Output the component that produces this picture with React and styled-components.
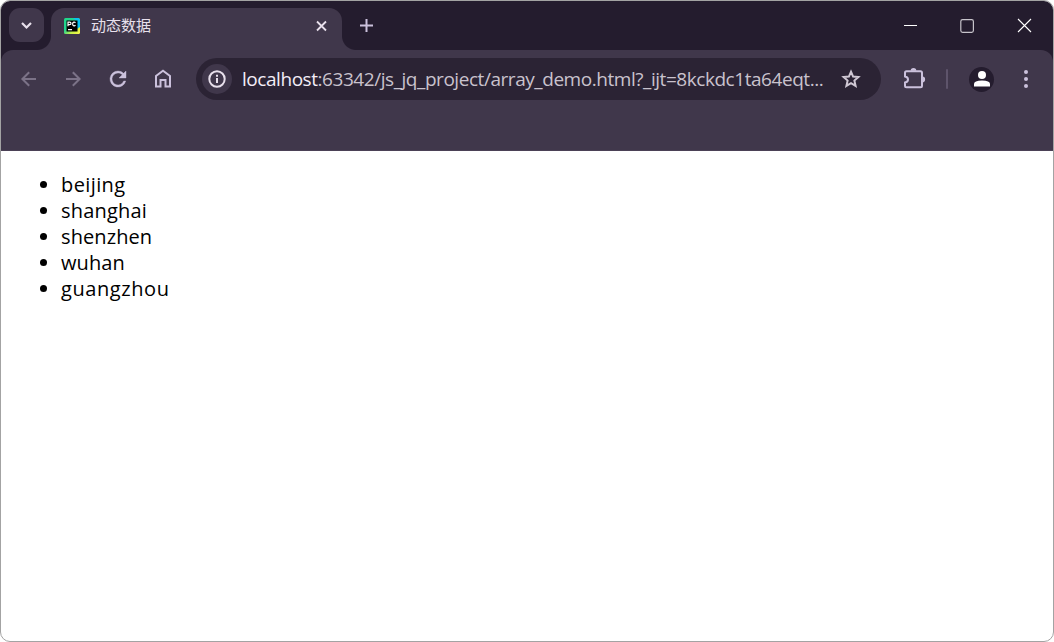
import React from "react";
import styled, { createGlobalStyle } from "styled-components";

const color = {
  frame: "#241c2e",
  toolbar: "#40374b",
  field: "#2b2334",
  icon: "#cbc1dc",
  dim: "#7b7287",
  light: "#e8e0ec",
};

const GlobalStyle = createGlobalStyle`
  *, *::before, *::after { box-sizing: border-box; }
  body { margin: 0; background: #fff; }
`;

const Window = styled.div`
  width: 1054px;
  height: 642px;
  display: flex;
  flex-direction: column;
  overflow: hidden;
  border: 1px solid #a3a3a3;
  border-radius: 10px;
  background: #fff;
  font-family: "Open Sans", "Noto Sans CJK SC", sans-serif;
`;

const TitleBar = styled.header`
  height: 49px;
  flex: none;
  display: flex;
  background: ${color.frame};
`;

const TabSearch = styled.button`
  width: 35px;
  height: 34px;
  margin: 7px 7px 0 8px;
  padding: 0;
  border: 0;
  border-radius: 11px;
  background: ${color.toolbar};
  display: grid;
  place-items: center;
`;

const Tab = styled.div`
  position: relative;
  width: 291px;
  height: 42px;
  margin-top: 7px;
  padding: 0 15px 6px 13px;
  display: flex;
  align-items: center;
  border-radius: 13px 13px 0 0;
  background: ${color.toolbar};

  &::before,
  &::after {
    content: "";
    position: absolute;
    bottom: 0;
    width: 14px;
    height: 14px;
  }
  &::before {
    left: -14px;
    background: radial-gradient(circle at 0 0, transparent 13.5px, ${color.toolbar} 14.5px);
  }
  &::after {
    right: -14px;
    background: radial-gradient(circle at 100% 0, transparent 13.5px, ${color.toolbar} 14.5px);
  }
`;

const TabTitle = styled.span`
  flex: 1;
  margin: -2px 0 0 11px;
  font: 15px/20px "Noto Sans CJK SC", sans-serif;
  color: ${color.light};
`;

const NewTab = styled.div`
  width: 48px;
  height: 49px;
  display: grid;
  place-items: center;
`;

const Controls = styled.div`
  margin-left: auto;
  display: flex;
`;

const Control = styled.div`
  width: 57px;
  height: 49px;
  display: grid;
  place-items: center;
`;

const ToolbarShell = styled.div`
  flex: none;
  background: ${color.frame};
`;

const Toolbar = styled.div`
  height: 101px;
  padding: 8px 8px 0 5px;
  display: flex;
  align-items: flex-start;
  border-radius: 12px 12px 0 0;
  background: ${color.toolbar};
  border-bottom: 1px solid #4b4156;
`;

const Tool = styled.div`
  width: ${(p) => p.$w || 45}px;
  height: 42px;
  flex: none;
  display: grid;
  place-items: center;
`;

const AddressBar = styled.div`
  width: 685px;
  height: 42px;
  margin-left: 11px;
  padding: 0 18px 0 6px;
  display: flex;
  align-items: center;
  border-radius: 21px;
  background: ${color.field};
`;

const SiteInfo = styled.div`
  width: 30px;
  height: 30px;
  flex: none;
  border-radius: 50%;
  background: ${color.toolbar};
  display: grid;
  place-items: center;
`;

const Url = styled.span`
  flex: 1;
  margin-left: 10px;
  white-space: nowrap;
  font-size: 19px;
  line-height: 26px;
  letter-spacing: -0.45px;
  color: #c9c2cd;
`;

const Host = styled.span`
  color: #f3edf7;
`;

const Divider = styled.div`
  width: 2px;
  height: 20px;
  margin-top: 11px;
  border-radius: 1px;
  background: #5e546b;
`;

const Avatar = styled.div`
  width: 25px;
  height: 25px;
  border-radius: 50%;
  background: ${color.frame};
  display: grid;
  place-items: center;
`;

const Page = styled.main`
  flex: 1;
`;

const List = styled.ul`
  margin: 21px 0 0;
  padding: 0 0 0 60px;
  font-size: 20px;
  line-height: 26px;
  color: #000;
`;

const Item = styled.li`
  letter-spacing: ${(p) => p.$spacing || 0}px;
`;

const Line = styled.svg.attrs((p) => ({ width: p.$w, height: p.$h || p.$w }))`
  display: block;
  overflow: visible;
  fill: none;
  stroke: ${(p) => p.$color || color.icon};
  stroke-width: ${(p) => p.$stroke || 2};
`;

const items = [
  { name: "beijing", spacing: 0.4 },
  { name: "shanghai", spacing: 0.2 },
  { name: "shenzhen", spacing: 0.1 },
  { name: "wuhan", spacing: 0.1 },
  { name: "guangzhou", spacing: 0.58 },
];

function PyCharmIcon() {
  return (
    <svg width="16" height="16" viewBox="0 0 16 16">
      <defs>
        <linearGradient id="pc" x1="0" y1="0" x2="1" y2="1">
          <stop offset="0" stopColor="#20d789" />
          <stop offset="0.4" stopColor="#22d38f" />
          <stop offset="0.7" stopColor="#c8ef45" />
          <stop offset="1" stopColor="#fcf84a" />
        </linearGradient>
      </defs>
      <rect width="16" height="16" rx="1.5" fill="url(#pc)" />
      <path d="M9 0H14.5L16 1.5V9L13 11V3Z" fill="#07c3f2" />
      <rect x="2.5" y="2.5" width="11" height="11" fill="#000" />
      <path d="M4 8.3V4.2H5.7Q7 4.2 7 5.4T5.7 6.7H4M11.5 4.7Q10.7 4 9.8 4.2Q8.6 4.5 8.6 6T9.8 7.8Q10.8 8 11.5 7.2M4 11.6H8" fill="none" stroke="#fff" strokeWidth="1.2" />
    </svg>
  );
}

export default function App() {
  return (
    <>
      <GlobalStyle />
      <Window>
        <TitleBar>
          <TabSearch aria-label="Search tabs">
            <Line $w={11} $h={7} $color={color.light} $stroke={2.2} viewBox="0 0 11 7"><path d="M1 1L5.5 5.5L10 1" /></Line>
          </TabSearch>
          <Tab>
            <PyCharmIcon />
            <TabTitle>动态数据</TabTitle>
            <Line $w={11} $color={color.light} $stroke={1.8} viewBox="0 0 11 11"><path d="M1 .5L10 9.5M10 .5L1 9.5" /></Line>
          </Tab>
          <NewTab>
            <Line $w={13} viewBox="0 0 13 13"><path d="M6.5 0V13M0 6.5H13" /></Line>
          </NewTab>
          <Controls>
            <Control><Line $w={13} $h={1} $color="#fff" $stroke={1} viewBox="0 0 13 1"><path d="M0 .5H13" /></Line></Control>
            <Control><Line $w={14} $color="#c7c4cb" $stroke={1.2} viewBox="0 0 14 14"><rect x="-.2" y=".7" width="12.6" height="12.6" rx="1.8" /></Line></Control>
            <Control><Line $w={13} $color="#fff" $stroke={1.1} viewBox="0 0 13 13"><path d="M0 0L13 13M13 0L0 13" /></Line></Control>
          </Controls>
        </TitleBar>
        <ToolbarShell>
          <Toolbar>
            <Tool><Line $w={15} $color={color.dim} viewBox="0 0 15 15"><path d="M15 7H1.5M8.2 .2L1.4 7L8.2 13.8" /></Line></Tool>
            <Tool><Line $w={15} $color={color.dim} viewBox="0 0 15 15"><path d="M0 7H13.5M6.8 .2L13.6 7L6.8 13.8" /></Line></Tool>
            <Tool $w={44}>
              <svg width="16" height="16" viewBox="4 4 16 16" fill={color.icon} stroke={color.icon} strokeWidth=".4" overflow="visible">
                <path d="M17.65 6.35A7.96 7.96 0 0 0 12 4a8 8 0 1 0 7.73 10h-2.08A6 6 0 1 1 12 6c1.66 0 3.14.69 4.22 1.78L13 11h7V4z" />
              </svg>
            </Tool>
            <Tool><Line $w={16} $h={18} viewBox="0 0 16 18"><path d="M1 16.5V6L8 .7L15 6V16.5H10.5V10H5.5V16.5Z" /></Line></Tool>
            <AddressBar>
              <SiteInfo>
                <Line $w={18} $color={color.light} viewBox="0 0 18 18"><circle cx="9" cy="9" r="7.7" /><path d="M9 8V13M9 4.8V6.8" /></Line>
              </SiteInfo>
              <Url><Host>localhost</Host>:63342/js_jq_project/array_demo.html?_ijt=8kckdc1ta64eqt...</Url>
              <Line $w={20} $color="#cfc7d3" $stroke={2} viewBox="0 0 20 20" style={{ marginRight: 2 }}>
                <path d="M10 2.7L12.1 7.6L17.4 8.1L13.4 11.6L14.6 16.9L10 14.1L5.4 16.9L6.6 11.6L2.6 8.1L7.9 7.6Z" />
              </Line>
            </AddressBar>
            <Tool $w={65}>
              <Line $w={22} viewBox="0 0 22 22">
                <path d="M3.5 3.2H17.5Q19 3.2 19 4.7V17.7Q19 19.2 17.5 19.2H3.5Q2 19.2 2 17.7V14.5Q5 14 5 11.5T2 8.5V4.7Q2 3.2 3.5 3.2Z" />
                <path d="M7.7 2.7a2.8 2.6 0 0 1 5.6 0ZM19.5 8.6a2.6 2.8 0 0 1 0 5.6Z" fill={color.icon} stroke="none" />
              </Line>
            </Tool>
            <Divider />
            <Tool $w={67}>
              <Avatar>
                <svg width="16" height="16" viewBox="0 0 16 16" fill="#fff"><circle cx="8" cy="4" r="4" /><path d="M0 15.5V13Q0 9.5 8 9.5T16 13V15.5Z" /></svg>
              </Avatar>
            </Tool>
            <Tool $w={22}>
              <svg width="4" height="18" viewBox="0 0 4 18" fill={color.icon}><circle cx="2" cy="2" r="2" /><circle cx="2" cy="9" r="2" /><circle cx="2" cy="16" r="2" /></svg>
            </Tool>
          </Toolbar>
        </ToolbarShell>
        <Page>
          <List>{items.map((item) => <Item key={item.name} $spacing={item.spacing}>{item.name}</Item>)}</List>
        </Page>
      </Window>
    </>
  );
}
